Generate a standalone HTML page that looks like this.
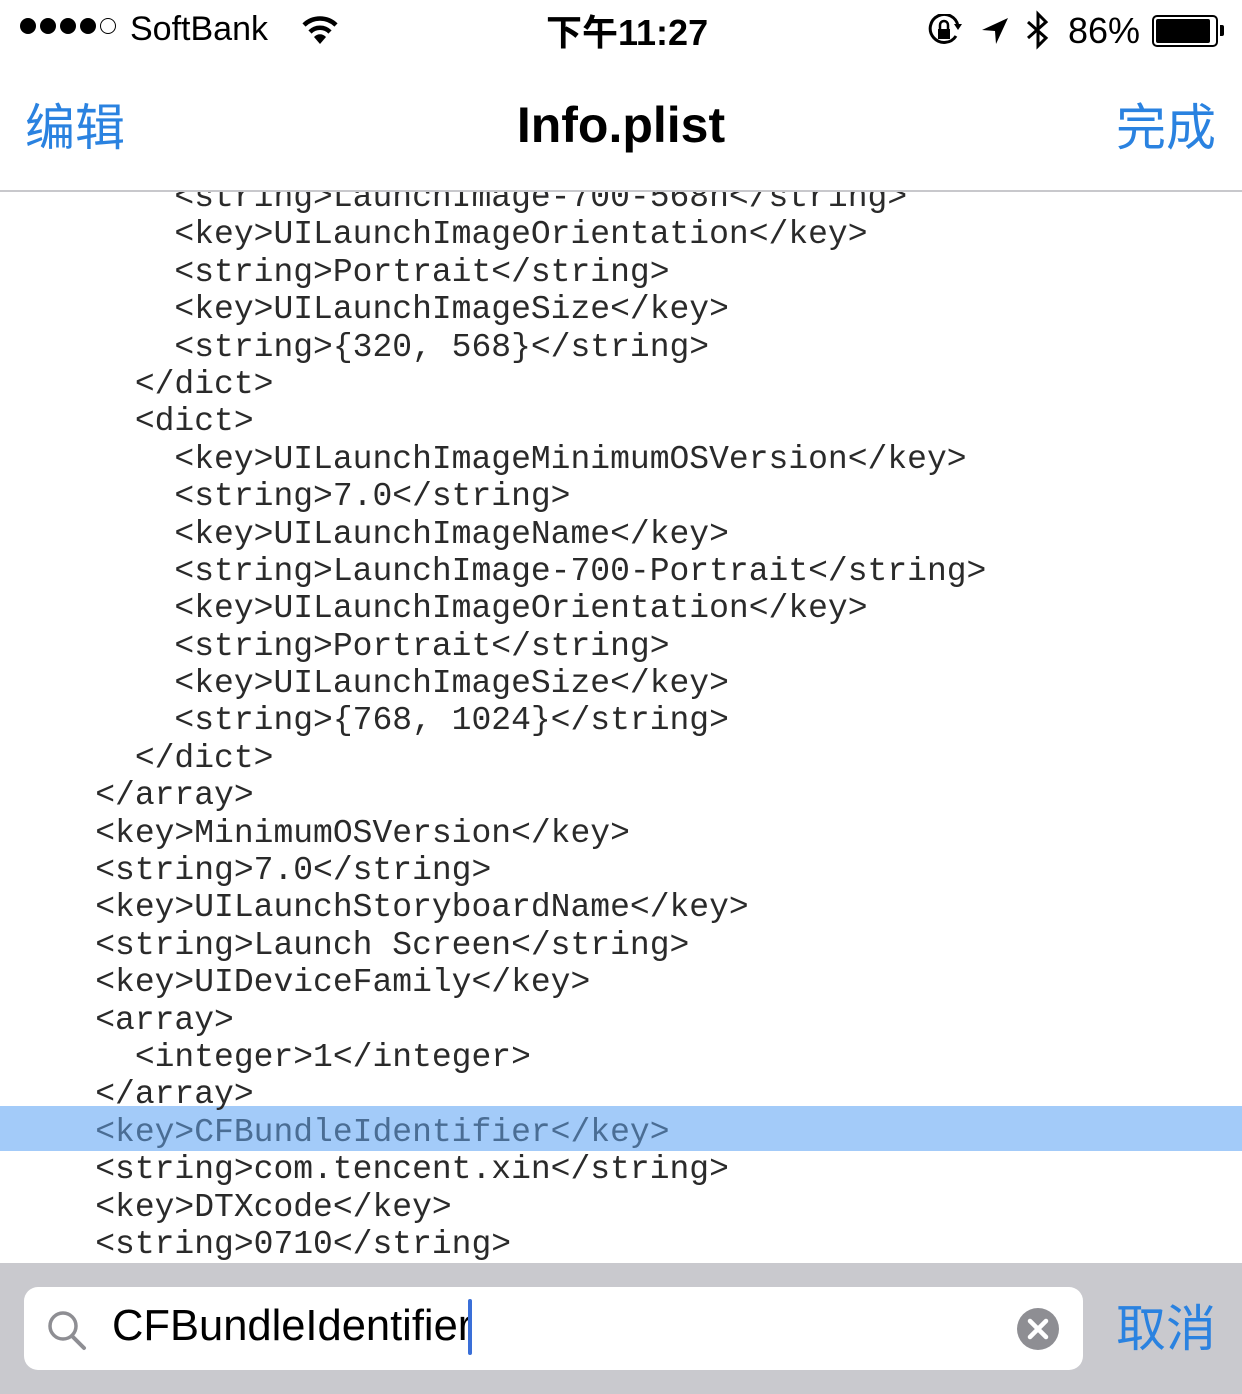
<!DOCTYPE html>
<html><head><meta charset="utf-8"><style>
*{margin:0;padding:0;box-sizing:border-box}
body{width:1242px;height:1394px;background:#fff;position:relative;overflow:hidden;font-family:"Liberation Sans","Noto Sans CJK SC",sans-serif}
.sb{position:absolute;top:0;left:0;width:1242px;height:64px;font-size:34px;color:#000}
.nav{position:absolute;top:64px;left:0;width:1242px;height:128px;border-bottom:2px solid #c8c8cc;background:#fff;z-index:2}
.code{position:absolute;top:192px;left:0;width:1242px;height:1071px;overflow:hidden}
.inner{position:absolute;top:-13px;left:0;width:100%}
.l{height:37.4px;line-height:37.4px;font-family:"Liberation Mono",monospace;font-size:33px;color:#2a2a2a;white-space:pre;padding-left:16px}
.hl{position:absolute;left:0;width:1242px;top:927px;height:45px;background:#a3cbf9}
.hlt{color:#4a6d94}
.bar{position:absolute;top:1263px;left:0;width:1242px;height:131px;background:#c9c9ce}
.field{position:absolute;left:24px;top:24px;width:1059px;height:83px;background:#fff;border-radius:14px}
</style></head><body>
<div class="sb">
<div style="position:absolute;left:20px;top:18px;display:flex;gap:4px;align-items:center">
<span style="width:16px;height:16px;border-radius:50%;background:#000;display:inline-block"></span>
<span style="width:16px;height:16px;border-radius:50%;background:#000;display:inline-block"></span>
<span style="width:16px;height:16px;border-radius:50%;background:#000;display:inline-block"></span>
<span style="width:16px;height:16px;border-radius:50%;background:#000;display:inline-block"></span>
<span style="width:16px;height:16px;border-radius:50%;border:1.5px solid #000;display:inline-block"></span>
</div>
<div style="position:absolute;left:130px;top:10px">SoftBank</div>
<svg style="position:absolute;left:300px;top:14px" width="40" height="32" viewBox="0 0 40 32"><path d="M4 11 A23 23 0 0 1 36 11" stroke="#000" stroke-width="4.5" fill="none"/><path d="M10 18 A14 14 0 0 1 30 18" stroke="#000" stroke-width="4.5" fill="none"/><path d="M20 30 L14 23 A8 8 0 0 1 26 23Z" fill="#000"/></svg>
<div style="position:absolute;left:546px;top:4px;font-weight:bold;font-size:36px">下午11:27</div>
<svg style="position:absolute;left:928px;top:14px" width="36" height="34" viewBox="0 0 36 34"><path d="M28 22 A14 14 0 1 1 30 12" stroke="#000" stroke-width="3" fill="none"/><path d="M26 10 L34 10 L30 16Z" fill="#000"/><rect x="10" y="15" width="12" height="10" fill="#000"/><path d="M12 15 V11 A4 4 0 0 1 20 11 V15" stroke="#000" stroke-width="2.5" fill="none"/></svg>
<svg style="position:absolute;left:980px;top:16px" width="30" height="30" viewBox="0 0 30 30"><path d="M28 2 L2 14 L15 15 L16 28Z" fill="#000"/></svg>
<svg style="position:absolute;left:1024px;top:10px" width="28" height="42" viewBox="0 0 28 42"><path d="M4 12 L22 28 L14 36 L14 4 L22 12 L4 28" stroke="#000" stroke-width="3" fill="none"/></svg>
<div style="position:absolute;left:1068px;top:10px;font-size:36px">86%</div>
<div style="position:absolute;left:1152px;top:15px;width:66px;height:32px;border:2px solid #000;border-radius:5px;padding:2px"><div style="width:54px;height:24px;background:#000;border-radius:2px"></div></div>
<div style="position:absolute;left:1220px;top:25px;width:4px;height:11px;background:#000;border-radius:0 2px 2px 0"></div>
</div>
<div class="nav">
<div style="position:absolute;left:25px;top:24px;font-size:50px;color:#2a82e0">编辑</div>
<div style="position:absolute;left:0;width:1242px;text-align:center;top:32px;font-size:50px;font-weight:bold">Info.plist</div>
<div style="position:absolute;right:26px;top:24px;font-size:50px;color:#2a82e0">完成</div>
</div>
<div class="code"><div class="inner">
<div class="hl"></div>
<div style="position:relative">
<div class="l">        &lt;string&gt;LaunchImage-700-568h&lt;/string&gt;</div>
<div class="l">        &lt;key&gt;UILaunchImageOrientation&lt;/key&gt;</div>
<div class="l">        &lt;string&gt;Portrait&lt;/string&gt;</div>
<div class="l">        &lt;key&gt;UILaunchImageSize&lt;/key&gt;</div>
<div class="l">        &lt;string&gt;{320, 568}&lt;/string&gt;</div>
<div class="l">      &lt;/dict&gt;</div>
<div class="l">      &lt;dict&gt;</div>
<div class="l">        &lt;key&gt;UILaunchImageMinimumOSVersion&lt;/key&gt;</div>
<div class="l">        &lt;string&gt;7.0&lt;/string&gt;</div>
<div class="l">        &lt;key&gt;UILaunchImageName&lt;/key&gt;</div>
<div class="l">        &lt;string&gt;LaunchImage-700-Portrait&lt;/string&gt;</div>
<div class="l">        &lt;key&gt;UILaunchImageOrientation&lt;/key&gt;</div>
<div class="l">        &lt;string&gt;Portrait&lt;/string&gt;</div>
<div class="l">        &lt;key&gt;UILaunchImageSize&lt;/key&gt;</div>
<div class="l">        &lt;string&gt;{768, 1024}&lt;/string&gt;</div>
<div class="l">      &lt;/dict&gt;</div>
<div class="l">    &lt;/array&gt;</div>
<div class="l">    &lt;key&gt;MinimumOSVersion&lt;/key&gt;</div>
<div class="l">    &lt;string&gt;7.0&lt;/string&gt;</div>
<div class="l">    &lt;key&gt;UILaunchStoryboardName&lt;/key&gt;</div>
<div class="l">    &lt;string&gt;Launch Screen&lt;/string&gt;</div>
<div class="l">    &lt;key&gt;UIDeviceFamily&lt;/key&gt;</div>
<div class="l">    &lt;array&gt;</div>
<div class="l">      &lt;integer&gt;1&lt;/integer&gt;</div>
<div class="l">    &lt;/array&gt;</div>
<div class="l hlt">    &lt;key&gt;CFBundleIdentifier&lt;/key&gt;</div>
<div class="l">    &lt;string&gt;com.tencent.xin&lt;/string&gt;</div>
<div class="l">    &lt;key&gt;DTXcode&lt;/key&gt;</div>
<div class="l">    &lt;string&gt;0710&lt;/string&gt;</div>
<div class="l">    &lt;key&gt;DTXcodeBuild&lt;/key&gt;</div>
</div>
</div></div>
<div class="bar">
<div class="field">
<svg style="position:absolute;left:22px;top:22px" width="42" height="42" viewBox="0 0 42 42"><circle cx="17" cy="17" r="13" stroke="#8e8e93" stroke-width="3.5" fill="none"/><path d="M26 27 L38 39" stroke="#8e8e93" stroke-width="4" stroke-linecap="round"/></svg>
<div style="position:absolute;left:88px;top:15px;font-size:43.5px;color:#000">CFBundleIdentifier</div>
<div style="position:absolute;left:444px;top:12px;width:4px;height:56px;background:#3a6fd8;border-radius:2px"></div>
<svg style="position:absolute;left:992px;top:20px" width="44" height="44" viewBox="0 0 44 44"><circle cx="22" cy="22" r="21" fill="#8e8e93"/><path d="M14 14 L30 30 M30 14 L14 30" stroke="#fff" stroke-width="4.5" stroke-linecap="round"/></svg>
</div>
<div style="position:absolute;right:26px;top:26px;font-size:50px;color:#2a82e0">取消</div>
</div>
</body></html>
